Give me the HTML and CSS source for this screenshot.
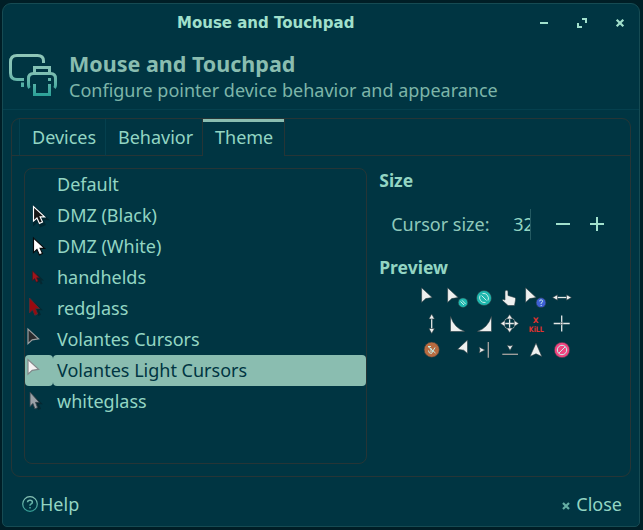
FILE: index.html
```html
<!DOCTYPE html>
<html lang="en">
<head>
<meta charset="utf-8">
<title>Mouse and Touchpad</title>
<link rel="stylesheet" href="styles.css">
</head>
<body>
<svg class="defs" width="0" height="0" aria-hidden="true">
  <defs>
    <linearGradient id="fade" gradientUnits="userSpaceOnUse" x1="0" y1="0" x2="0" y2="42"><stop offset="0" stop-color="#8fc6b8"/><stop offset=".45" stop-color="#7fbfb2"/><stop offset="1" stop-color="#2aa198"/></linearGradient>
    <linearGradient id="fade-small" gradientUnits="userSpaceOnUse" x1="0" y1="0" x2="0" y2="16"><stop offset="0" stop-color="#8fc6b8"/><stop offset="1" stop-color="#2f9c94"/></linearGradient>
    <path id="pointer" d="M0 0V14.6L4.2 10.8 10.6 9.8Z"/>
    <path id="classic" d="M0 0V15.2L3.6 12 6.2 17.6 9.4 16.2 6.9 10.8H11.6Z"/>
  </defs>
</svg>
<main class="window">
  <header class="titlebar">
    <span class="title">Mouse and Touchpad</span>
    <div class="controls">
      <svg width="10" height="10"><path d="M1 5H9" stroke-width="2"/></svg>
      <svg width="10" height="10"><path d="M5 1H9V5M1 5V9H5" stroke-width="2"/></svg>
      <svg width="10" height="10"><path d="M1.7 1.7 8.3 8.3M8.3 1.7 1.7 8.3" stroke-width="2.2"/></svg>
    </div>
  </header>
  <section class="heading">
    <svg class="heading-icon" width="48" height="42" fill="none" stroke="url(#fade)" stroke-width="3">
      <path d="M34.5 9V7Q34.5 1.5 28.500 1.500H8Q1.500 1.500 1.500 8V19Q1.500 25.500 8 25.500H15"/>
      <path d="M13.500 28.500V32M12 31.500H15"/>
      <path d="M25.500 18V13.500H40.500V18"/>
      <path d="M20.500 34Q19.500 33 19.500 31V24.500Q19.500 19.500 24.500 19.500H41.500Q46.500 19.500 46.500 24.500V31Q46.500 33 45.500 34"/>
      <path d="M25.500 30V40.500H40.500V30M39 25.500H42"/>
    </svg>
    <div>
      <h1>Mouse and Touchpad</h1>
      <p>Configure pointer device behavior and appearance</p>
    </div>
  </section>
  <section class="notebook">
    <nav class="tabs">
      <span class="tab devices">Devices</span>
      <span class="tab behavior">Behavior</span>
      <span class="tab active">Theme</span>
      <span class="rest"></span>
    </nav>
    <div class="page">
      <ul class="themes">
        <li><span class="cell"></span><span class="name">Default</span></li>
        <li><span class="cell"><svg width="28" height="31"><use href="#classic" transform="translate(9.500 8)" fill="#001921" stroke="#001921" stroke-width="3" opacity=".55"/><use href="#classic" transform="translate(8.500 6.500) scale(.96)" fill="#171717" stroke="#fff" stroke-width="1.200"/></svg></span><span class="name">DMZ (Black)</span></li>
        <li><span class="cell"><svg width="28" height="31"><use href="#classic" transform="translate(8.500 7) scale(.96)" fill="#fff" stroke="#080b0d" stroke-width="1.200"/></svg></span><span class="name">DMZ (White)</span></li>
        <li><span class="cell"><svg width="28" height="31"><use href="#classic" transform="translate(12 12) scale(.6)" fill="#052831"/><use href="#classic" transform="translate(7.500 9) scale(.6 .63)" fill="#a0151b" stroke="#4b121c" stroke-width="1"/></svg></span><span class="name">handhelds</span></li>
        <li><span class="cell"><svg width="28" height="31"><use href="#classic" transform="translate(8 8) scale(.85)" fill="#052831"/><use href="#classic" transform="translate(4.500 5) scale(.86 .98)" fill="#99090f" stroke="#5a2930" stroke-width="1"/></svg></span><span class="name">redglass</span></li>
        <li><span class="cell"><svg width="28" height="31"><use href="#pointer" transform="translate(3 5)" fill="#292b2d" stroke="#9b9fa1" stroke-width="1.200"/></svg></span><span class="name">Volantes Cursors</span></li>
        <li class="selected"><span class="cell"><svg width="28" height="31"><use href="#pointer" transform="translate(3 4.500)" fill="#f5f2f3" stroke="#82878a" stroke-width="1.200"/></svg></span><span class="name">Volantes Light Cursors</span></li>
        <li><span class="cell"><svg width="28" height="31"><use href="#classic" transform="translate(8 9) scale(.85)" fill="#052831"/><use href="#classic" transform="translate(5 6) scale(.8 .96)" fill="#9aa1a7" stroke="#35434b" stroke-width="1"/></svg></span><span class="name">whiteglass</span></li>
      </ul>
      <aside class="settings">
        <h2>Size</h2>
        <div class="size-row">
          <span class="size-label">Cursor size:</span>
          <span class="value">32</span>
          <svg width="14" height="14"><path d="M0 7H14" stroke-width="2"/></svg>
          <svg width="14" height="14"><path d="M0 7H14M7 0V14" stroke-width="2"/></svg>
        </div>
        <h2>Preview</h2>
        <div class="preview">
          <svg><use href="#pointer" transform="translate(2.600 2.800)"/></svg>
          <svg><use href="#pointer" transform="translate(2.600 2.800)"/><circle cx="18" cy="17.700" r="4.800" fill="#1fb7ae"/><path d="M15.500 16.500 19 20M17 15.300 20.500 19" class="thin pale"/></svg>
          <svg><circle cx="13" cy="13" r="7.500" fill="#1fb7ae"/><path d="M9 10.500A5 5 0 0 0 14.500 17.500M11.500 8.500A5 5 0 0 1 17 15.500M10.500 10.500 15.500 15.500" class="thin pale"/></svg>
          <svg><path d="M8 13V6Q9.500 4.500 11 6V10.500L17.500 12.500Q19 13 18.500 15L17.500 20.500H11L5.500 15.500Q5.500 13.500 8 15Z"/></svg>
          <svg><use href="#pointer" transform="translate(2.600 2.800)"/><circle cx="18" cy="17.700" r="4.900" fill="#3c5fd5"/><path d="M16.500 16.300Q16.700 14.800 18.200 14.900 20 15.200 19.500 16.700L18.200 18.200V19M18.200 20V21" class="thin pale"/></svg>
          <svg><path d="M6 12.500H20" class="line"/><path d="M3.500 12.500 8.500 9.700V15.300ZM22.500 12.500 17.500 9.700V15.300Z"/></svg>
          <svg><path d="M12.700 6V20" class="line"/><path d="M12.700 3 9.900 8H15.500ZM12.700 22.500 9.900 17.500H15.500Z"/></svg>
          <svg><path d="M5.500 5.300V20.500H20Q9.500 17.500 5.500 5.300Z"/></svg>
          <svg><path d="M20.500 5.300V20.500H6Q16.500 17.500 20.500 5.300Z"/></svg>
          <svg><circle cx="12.600" cy="12.500" r="5.800" class="line ring"/><path d="M12.600 5V20M5 12.500H20" class="line"/><path d="M12.600 3.500 9.500 8H15.700ZM12.600 21.500 9.500 17H15.700ZM3.500 12.500 8 9.400V15.600ZM21.700 12.500 17.200 9.400V15.600Z"/></svg>
          <svg class="kill"><text x="12.700" y="12">X</text><text x="13.300" y="21" textLength="15" lengthAdjust="spacingAndGlyphs">KiLL</text></svg>
          <svg><path d="M12.700 4.500V20.500M4.700 12.500H20.700" class="line"/><circle cx="12.700" cy="12.500" r="1.200"/></svg>
          <svg><circle cx="12.700" cy="12.700" r="7.600" fill="#b86b40"/><path d="M9 9.500 16.500 16M9 9.500H12M9.500 13.500Q9.500 16.500 12.500 16.500L16 10.500M12 11V15" class="thin pale"/></svg>
          <svg><path d="M22.500 3V16.500L18.700 13.200 12.500 12.300Z"/></svg>
          <svg><path d="M8 10 14 13 8 16 9 13Z"/><path d="M17.300 5V20.700" class="line dim"/></svg>
          <svg><path d="M10 8 13 9 16 8 13 13.500Z"/><path d="M5.300 17.300H21" class="line dim"/></svg>
          <svg><path d="M13 6 18.800 19.500 13 16.800 7 19.500Z"/></svg>
          <svg><circle cx="13" cy="13" r="7.700" fill="#f04480"/><circle cx="13" cy="13" r="4.700" class="thin pale"/><path d="M9.800 16.200 16.200 9.800" class="thin pale"/></svg>
        </div>
      </aside>
    </div>
  </section>
  <footer class="actions">
    <span class="action"><svg width="16" height="16" fill="none" stroke="url(#fade-small)" stroke-width="1.200"><circle cx="8" cy="8" r="7.300"/><path d="M5.600 6.300Q5.600 4.300 8 4.300 10.400 4.300 10.400 6.300 10.400 7.400 9 8 8 8.400 8 9.700M8 11V12.600" stroke-width="1.500"/></svg><span class="help">Help</span></span>
    <span class="action"><svg width="8" height="8" class="close-icon"><path d="M1 1 7 7M7 1 1 7" stroke="#65aea4" stroke-width="2.200"/></svg><span class="close">Close</span></span>
  </footer>
</main>
</body>
</html>
```

FILE: styles.css
```css
* { box-sizing: border-box; }
body {
  margin: 0;
  height: 530px;
  padding: 3px 3px 3px 2px;
  overflow: hidden;
  background: #001e26;
  color: #93d5c3;
  font: 18px/24px "Noto Sans", sans-serif;
}
.defs { position: absolute; }
svg { display: block; flex: none; }
h1, h2, p, ul { margin: 0; padding: 0; }
.window {
  width: 638px;
  height: 524px;
  border: 1px solid #164b53;
  border-radius: 9px 9px 5px 5px;
  background: #003542;
  display: flex;
  flex-direction: column;
}
.titlebar { height: 40px; position: relative; flex: none; }
.title {
  display: block;
  padding-left: 174px;
  font: bold 15px/38px "DejaVu Sans", sans-serif;
  color: #a1e0cc;
}
.controls {
  position: absolute;
  right: 14px;
  top: 14px;
  display: flex;
  gap: 28px;
  fill: none;
  stroke: #a1e0cc;
}
.heading {
  height: 66px;
  flex: none;
  display: flex;
  padding: 7px 6px;
  gap: 12px;
  border-bottom: 1px solid #05404e;
  color: #8abdb0;
}
.heading-icon { margin-top: 3px; }
.heading p, .heading h1 { white-space: nowrap; }
.heading h1 { font-size: 21.500px; line-height: 26px; }
.heading p { line-height: 27px; color: #7db5a9; }
.notebook {
  margin: 8px 8px 0;
  width: 620px;
  height: 359px;
  border: 1px solid #263536;
  border-radius: 9px;
  flex: none;
}
.tabs { display: flex; height: 37px; padding-left: 7px; background: linear-gradient(#263536, #263536) left bottom / 8px 1px no-repeat; }
.tab {
  border-left: 1px solid #05404e;
  border-bottom: 1px solid #263536;
  padding-left: 12px;
  line-height: 36px;
}
.devices { width: 86px; }
.behavior { width: 97px; }
.active {
  width: 83px;
  border: solid #263536;
  border-width: 0 1px;
  position: relative;
}
.active::before {
  content: "";
  position: absolute;
  left: 0;
  right: 0;
  top: 0;
  height: 3px;
  background: #8abdb0;
}
.rest { flex: 1; border-bottom: 1px solid #263536; }
.page { display: flex; padding: 12px; gap: 12px; }
.themes {
  width: 345px;
  height: 296px;
  border: 1px solid #263536;
  border-radius: 8px;
  list-style: none;
}
.themes li { display: flex; height: 31px; line-height: 31px; }
.cell { width: 28px; border-radius: 4px; }
.name { flex: 1; padding-left: 4px; border-radius: 4px; }
.selected { color: #003542; }
.selected .cell, .selected .name { background: #8abdb0; }
.settings { width: 240px; }
h2 { font-size: 17.500px; line-height: 25px; }
.size-row {
  height: 62px;
  display: flex;
  align-items: center;
  padding-left: 12px;
  stroke: #a1e0cc;
}
.size-label { width: 122px; color: #8fc9bb; }
.value {
  width: 18px;
  height: 31px;
  line-height: 31px;
  overflow: hidden;
  border-right: 1px solid #245a62;
  margin-right: 25px;
}
.size-row svg + svg { margin-left: 20px; }
.preview {
  display: grid;
  grid-template-columns: repeat(6, 26px);
  grid-auto-rows: 26px;
  margin: 5px 0 0 40px;
}
.preview svg { width: 26px; height: 26px; fill: #eef0ef; stroke: #273b40; stroke-width: .6; }
.preview .line { fill: none; stroke: #e3e7e5; stroke-width: 1.300; }
.preview .ring { stroke: #a3b1b2; stroke-width: 1; }
.preview .dim { stroke: #a8a5a1; }
.preview .thin { fill: none; stroke-width: 1; }
.preview .pale { stroke: #c5f0e9; }
.preview .kill { fill: #e3322e; stroke: none; font: bold 7.500px/1 "DejaVu Sans", sans-serif; text-anchor: middle; }
.actions { display: flex; justify-content: space-between; padding: 15px 17px 0 19px; }
.action { display: flex; align-items: center; }
.help { padding-left: 2px; }
.close { padding-left: 6px; }
.close-icon { margin-top: 3px; }
```
